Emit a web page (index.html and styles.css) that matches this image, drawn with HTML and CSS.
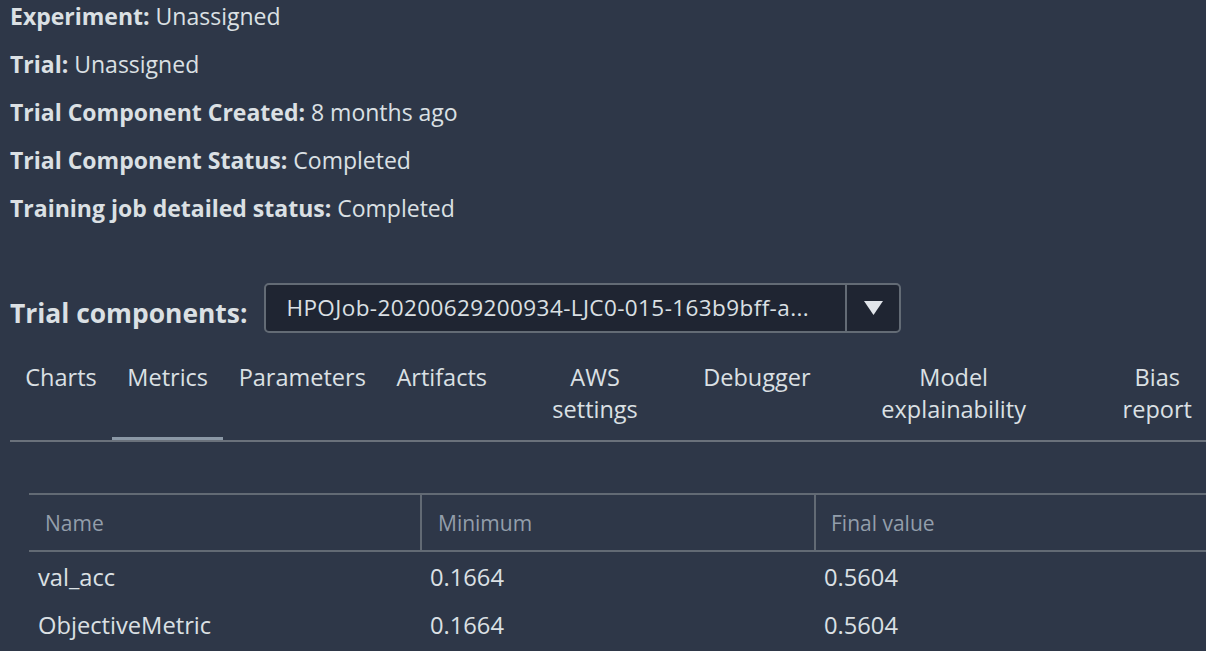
FILE: index.html
```html
<!DOCTYPE html>
<html>
<head>
<meta charset="utf-8">
<link rel="stylesheet" href="styles.css">
</head>
<body>
<div class="page">
  <div class="info">
    <div class="info-row"><b>Experiment:</b> Unassigned</div>
    <div class="info-row"><b>Trial:</b> Unassigned</div>
    <div class="info-row"><b>Trial Component Created:</b> 8 months ago</div>
    <div class="info-row"><b>Trial Component Status:</b> Completed</div>
    <div class="info-row"><b>Training job detailed status:</b> Completed</div>
  </div>

  <div class="picker">
    <span class="picker-label">Trial components:</span>
    <div class="select">
      <span class="select-value">HPOJob-20200629200934-LJC0-015-163b9bff-a...</span>
      <span class="select-btn"><svg width="19" height="14" viewBox="0 0 19 14"><path d="M0 0H19L9.5 14Z" fill="#e1e5ea"/></svg></span>
    </div>
  </div>

  <div class="tabs">
    <div class="tab">Charts</div>
    <div class="tab active">Metrics</div>
    <div class="tab">Parameters</div>
    <div class="tab">Artifacts</div>
    <div class="tab tab-aws">AWS<br>settings</div>
    <div class="tab">Debugger</div>
    <div class="tab tab-model">Model<br>explainability</div>
    <div class="tab tab-bias">Bias<br>report</div>
  </div>

  <div class="table-wrap">
    <table class="metrics">
      <colgroup>
        <col class="col-name">
        <col class="col-min">
        <col class="col-final">
      </colgroup>
      <thead>
        <tr><th>Name</th><th>Minimum</th><th>Final value</th></tr>
      </thead>
      <tbody>
        <tr><td>val_acc</td><td>0.1664</td><td>0.5604</td></tr>
        <tr><td>ObjectiveMetric</td><td>0.1664</td><td>0.5604</td></tr>
      </tbody>
    </table>
  </div>
</div>
</body>
</html>
```

FILE: styles.css
```css
html, body {
  margin: 0;
  padding: 0;
  background: #2e3748;
  overflow: hidden;
}
body {
  width: 1206px;
  height: 651px;
  font-family: "Open Sans", "Liberation Sans", sans-serif;
  color: #dbe0e4;
}
.page {
  display: flex;
  flex-direction: column;
}
.info {
  display: flex;
  flex-direction: column;
  gap: 15px;
  padding-left: 10px;
}
.info-row {
  font-size: 23px;
  line-height: 33px;
  white-space: nowrap;
}
.info-row b {
  font-weight: 700;
}
.picker {
  display: flex;
  align-items: center;
  gap: 17px;
  margin-top: 58px;
  padding-left: 10px;
}
.picker-label {
  font-size: 26.4px;
  font-weight: 700;
  line-height: 40px;
  padding-top: 10px;
  white-space: nowrap;
}
.select {
  display: flex;
  width: 633px;
  height: 46px;
  border: 2px solid #636b75;
  border-radius: 5px;
  background: #1f2532;
}
.select-value {
  flex: 1;
  font-size: 22.5px;
  letter-spacing: 0.4px;
  line-height: 46px;
  padding-left: 20px;
  white-space: nowrap;
  overflow: hidden;
}
.select-btn {
  width: 52px;
  border-left: 2px solid #636b75;
  display: flex;
  align-items: center;
  justify-content: center;
}
.tabs {
  display: flex;
  margin-top: 28px;
  margin-left: 10px;
  border-bottom: 2px solid #6a717b;
  overflow: hidden;
}
.tab {
  flex: none;
  padding: 0 15.3px 15px;
  font-size: 23.5px;
  line-height: 32px;
  text-align: center;
  white-space: nowrap;
  position: relative;
}
.tab.active::after {
  content: "";
  position: absolute;
  left: 0;
  right: 0;
  bottom: 0;
  height: 3px;
  background: #8b98a6;
}
.tab-aws { width: 155px; }
.tab-model { width: 225px; }
.tab-bias { width: 121px; }
.table-wrap {
  margin-top: 51px;
  padding-left: 29px;
}
.metrics {
  border-collapse: collapse;
  width: 1180px;
  table-layout: fixed;
}
.col-name { width: 392px; }
.col-min { width: 394px; }
.col-final { width: 394px; }
.metrics th {
  font-weight: 400;
  font-size: 21px;
  color: #939eab;
  text-align: left;
  height: 55px;
  padding: 0 16px;
  border-top: 2px solid #626a74;
  border-bottom: 2px solid #626a74;
  border-left: 2px solid #626a74;
}
.metrics th:first-child {
  border-left: none;
  padding-left: 16px;
}
.metrics th:last-child {
  padding-left: 15px;
}
.metrics td {
  font-size: 23.7px;
  height: 44px;
  padding: 3px 9px 1px;
}
```
